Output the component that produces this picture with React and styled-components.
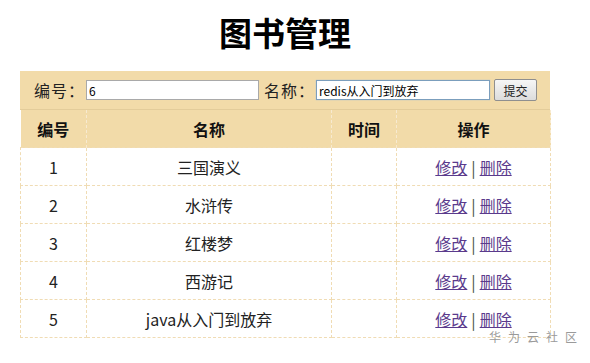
import React from "react";
import styled, { createGlobalStyle } from "styled-components";

const GlobalStyle = createGlobalStyle`
  body {
    margin: 0;
    background: #fff;
    font-family: "Noto Sans CJK SC", "Liberation Sans", sans-serif;
    color: #222;
  }
`;

const Page = styled.div`
  position: relative;
  width: 590px;
  height: 363px;
  overflow: hidden;
`;

const Title = styled.h1`
  margin: 0;
  padding: 10px 20px 0 0;
  height: 71px;
  box-sizing: border-box;
  text-align: center;
  font-size: 33px;
  font-weight: 700;
  line-height: 44px;
  color: #000;
`;

const Panel = styled.div`
  width: 530px;
  margin-left: 20px;
`;

const FormBar = styled.form`
  display: flex;
  align-items: center;
  height: 38px;
  padding-left: 14px;
  background: #f2dba9;
  border-bottom: 1px solid #e3cc9a;
  font-size: 16px;
  color: #222;
`;

const Label = styled.label`
  width: 52px;
  margin-left: ${(p) => p.$gap || 0}px;
  letter-spacing: 1px;
`;

const Input = styled.input`
  width: ${(p) => p.$w}px;
  height: 20px;
  box-sizing: border-box;
  padding: 1px 2px;
  border: 1px solid ${(p) => (p.$focus ? "#7b9ebd" : "#a9a9a9")};
  box-shadow: ${(p) => (p.$focus ? "0 0 1px #9ab8d8" : "none")};
  font-family: "Noto Sans CJK SC", "Liberation Sans", sans-serif;
  font-size: 12px;
  color: #000;
  outline: none;
`;

const Button = styled.button`
  margin-left: 4px;
  height: 22px;
  width: 43px;
  padding: 0;
  border: 1px solid #8f8f8f;
  border-radius: 2px;
  background: linear-gradient(#f6f6f6, #dcdcdc);
  font-family: "Noto Sans CJK SC", sans-serif;
  font-size: 12px;
  color: #222;
`;

const Table = styled.table`
  width: 530px;
  border-collapse: collapse;
  table-layout: fixed;
  font-size: 16px;
`;

const Th = styled.th`
  height: 37px;
  background: #f2dba9;
  font-weight: 700;
  font-size: 16px;
  color: #111;
  padding: 0;
  border-right: 1px dashed #f7ead0;
`;

const Td = styled.td`
  height: 37px;
  padding: 0;
  text-align: center;
  border: 1px dashed #f0dcb4;
  color: #222;
`;

const Link = styled.a`
  color: #5a3a8c;
  text-decoration: underline;
  cursor: pointer;
`;

const Sep = styled.span`
  color: #3f523f;
  margin: 0 4px;
`;

const Watermark = styled.div`
  position: absolute;
  right: 6px;
  bottom: 19px;
  font-size: 12px;
  line-height: 14px;
  letter-spacing: 7px;
  color: #9a9a9a;
`;

const books = [
  { id: 1, name: "三国演义" },
  { id: 2, name: "水浒传" },
  { id: 3, name: "红楼梦" },
  { id: 4, name: "西游记" },
  { id: 5, name: "java从入门到放弃" },
];

export default function App() {
  return (
    <Page>
      <GlobalStyle />
      <Title>图书管理</Title>
      <Panel>
        <FormBar onSubmit={(e) => e.preventDefault()}>
          <Label>编号：</Label>
          <Input $w={173} defaultValue="6" />
          <Label $gap={5}>名称：</Label>
          <Input $w={174} $focus defaultValue="redis从入门到放弃" />
          <Button type="submit">提交</Button>
        </FormBar>
        <Table>
          <colgroup>
            <col style={{ width: 66 }} />
            <col style={{ width: 245 }} />
            <col style={{ width: 65 }} />
            <col style={{ width: 154 }} />
          </colgroup>
          <thead>
            <tr>
              <Th>编号</Th>
              <Th>名称</Th>
              <Th>时间</Th>
              <Th>操作</Th>
            </tr>
          </thead>
          <tbody>
            {books.map((b) => (
              <tr key={b.id}>
                <Td>{b.id}</Td>
                <Td>{b.name}</Td>
                <Td />
                <Td>
                  <Link>修改</Link>
                  <Sep>|</Sep>
                  <Link>删除</Link>
                </Td>
              </tr>
            ))}
          </tbody>
        </Table>
      </Panel>
      <Watermark>华为云社区</Watermark>
    </Page>
  );
}
